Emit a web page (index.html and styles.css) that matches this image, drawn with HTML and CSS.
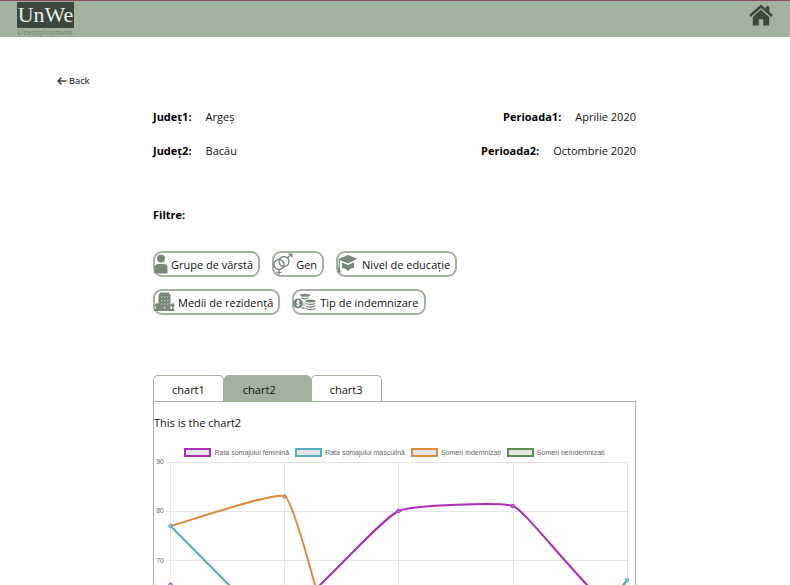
FILE: index.html
```html
<!DOCTYPE html>
<html lang="ro">
<head>
  <meta charset="utf-8">
  <title>UnWe</title>
  <link rel="stylesheet" href="styles.css">
</head>
<body>
  <div class="page">
    <header class="topbar">
      <a class="logo" href="#">
        <span class="logo-name">UnWe</span>
        <span class="logo-sub">Unemployment</span>
      </a>
      <a class="home" href="#" aria-label="Home">
        <svg width="24" height="22" viewBox="0 0 24 22" fill="currentColor">
          <path d="M12 0.5 16.8 4.8V2.2h3.5v5.7l3.5 3.2-1.5 1.8L12 3.9 1.700 12.900 0.200 11.100z"/>
          <path d="M12 5.800 20.200 13v8.500h-6v-6.200h-4.400v6.200h-6V13z"/>
        </svg>
      </a>
    </header>

    <a class="back" href="#">
      <svg width="10" height="8" viewBox="0 0 10 8" fill="none" stroke="currentColor" stroke-width="1.500"><path d="M4.500 0.500 1 4l3.500 3.500M1 4h8.500"/></svg>
      <span>Back</span>
    </a>

    <main class="content">
      <dl class="facts">
        <div class="fact"><dt>Județ1:</dt><dd>Argeș</dd></div>
        <div class="fact"><dt>Perioada1:</dt><dd>Aprilie 2020</dd></div>
        <div class="fact"><dt>Județ2:</dt><dd>Bacău</dd></div>
        <div class="fact"><dt>Perioada2:</dt><dd>Octombrie 2020</dd></div>
      </dl>

      <h2 class="filters-title">Filtre:</h2>
      <div class="filters">
        <button class="filter" type="button">
          <svg width="14" height="20" viewBox="0 0 14 20" fill="currentColor"><circle cx="7" cy="4.500" r="4"/><path d="M.5 19.500V14q0-4 4-4h5q4 0 4 4v5.500z"/></svg>
          <span>Grupe de vârstă</span>
        </button>
        <button class="filter" type="button">
          <svg width="20" height="22" viewBox="0 0 20 22" fill="none" stroke="currentColor" stroke-width="1.300"><circle cx="6" cy="11.500" r="5"/><circle cx="11" cy="8.500" r="5"/><path d="M6 16.500V22M3.500 19.300h5M14.500 5l3.500-3.500"/><path d="M15 .5h4.500V5z" fill="currentColor" stroke="none"/></svg>
          <span>Gen</span>
        </button>
        <button class="filter" type="button">
          <svg width="22" height="20" viewBox="0 0 22 20" fill="currentColor"><path d="M11 1 20.500 4.800 11 9.500 2.800 6v6.500l1 6H.3L1.500 12.500V5z"/><path d="M5 8.500 11 11l6-2.800v5.500Q14 13.500 11 17 8.500 14 5 14z"/></svg>
          <span>Nivel de educație</span>
        </button>
        <button class="filter" type="button">
          <svg width="21" height="20" viewBox="0 0 21 20"><path fill="currentColor" d="M4.500 2.500 6 1.500V.5h9v1l1.500 1V17H18v-2q-2-.5-1-2.500 1.500-2 3-.5 1.500 2-.5 3v2h1V19H0v-2h2v-2q-2-1-.5-3 1.500-1.500 3 0z"/><path stroke="#c4ccc2" d="M7 5h1.500M10 5h1.500M13 5h1.500M7 8.500h1.500M10 8.500h1.500M13 8.500h1.500M7 12h1.500M10 12h1.500M13 12h1.500M10 17v-2h1v2"/></svg>
          <span>Medii de rezidență</span>
        </button>
        <button class="filter" type="button">
          <svg width="24" height="18" viewBox="0 0 24 18"><g fill="currentColor"><circle cx="5" cy="10.500" r="4.900"/><ellipse cx="12" cy="2.300" rx="5" ry="1.500"/><ellipse cx="17.500" cy="8" rx="5" ry="1.500"/></g><path d="M8 4.800q4 2 7.500 0M12.500 10.500q5 2 10 0M12.500 13q5 2 10 0M12.500 15.500q5 2 10 0M10.500 9.500h1M10.500 12h1M8.500 15h3" fill="none" stroke="currentColor" stroke-width="1.300"/><path d="M6.700 8.700q-3-1.200-3.200.3 0 1 1.700 1.400 1.600.5 1.300 1.700-.5 1.200-3.200.2M5 7v7" fill="none" stroke="#fff"/></svg>
          <span>Tip de indemnizare</span>
        </button>
      </div>

      <div class="tabs" role="tablist">
        <button class="tab" type="button" role="tab">chart1</button>
        <button class="tab tab-active" type="button" role="tab" aria-selected="true">chart2</button>
        <button class="tab" type="button" role="tab">chart3</button>
      </div>
      <section class="panel">
        <p class="panel-title">This is the chart2</p>
        <ul class="legend">
          <li><span class="swatch purple"></span>Rata șomajului feminină</li>
          <li><span class="swatch teal"></span>Rata șomajului masculină</li>
          <li><span class="swatch orange"></span>Șomeri îndemnizați</li>
          <li><span class="swatch green"></span>Șomeri neîndemnizați</li>
        </ul>
        <svg class="chart" viewBox="154 457 481 230">
          <path class="grid" d="M166 462.500H627M166 511.500H627M166 560.500H627M166 609.500H627M170.500 462V687M284.500 462V687M398.500 462V687M513.500 462V687M627.500 462V687"/>
          <g class="axis" text-anchor="end">
            <text x="164" y="464">90</text>
            <text x="164" y="513">80</text>
            <text x="164" y="563">70</text>
          </g>
          <g class="lines">
            <path stroke="#5a9150" d="M627 580 618 594"/>
            <path stroke="#e08a3a" d="M170.500 526C180 524 272 492 284.500 496 C290 498 303 541 315 585L325 622"/>
            <path stroke="#55adc0" d="M170.500 526 229 585 245 601M627 580 618 592"/>
            <path stroke="#ae2cb9" d="M284 619 320 585C345 561 385 517 398.500 511C412 505 502 502 513 506C522 509 550 545 587 585L600 599"/>
          </g>
          <g fill="#aaa" fill-opacity=".5">
            <circle cx="170.500" cy="526" r="1.800" stroke="#55adc0"/>
            <circle cx="284.500" cy="496.500" r="1.800" stroke="#e08a3a"/>
            <circle cx="398.500" cy="511" r="1.800" stroke="#ae2cb9"/>
            <circle cx="513" cy="506" r="1.800" stroke="#ae2cb9"/>
            <circle cx="170.500" cy="585" r="1.800" stroke="#ae2cb9"/>
            <circle cx="627" cy="580" r="1.800" stroke="#55adc0"/>
          </g>
        </svg>
      </section>
    </main>
  </div>
</body>
</html>
```
FILE: styles.css
```css
* { box-sizing: border-box; }

body {
  margin: 0;
  background: #fff;
  color: #111;
  font: 11px/16px "Open Sans", "Noto Sans", sans-serif;
}

a { color: inherit; text-decoration: none; }
svg { display: block; flex: none; }

.page { height: 100vh; overflow: hidden; }

.topbar {
  display: flex;
  justify-content: space-between;
  align-items: flex-start;
  height: 37px;
  padding: 1px 17px;
  border-top: 1px solid #8b4561;
  background: #a3b19f;
  color: #3c463d;
}

.logo { display: flex; flex-direction: column; font-family: "Liberation Serif", serif; }
.logo-name {
  width: 57px;
  background: #3c463d;
  color: #e8ece6;
  font-size: 22px;
  line-height: 26px;
  text-align: center;
}
.logo-sub { color: #78877a; font-size: 9px; line-height: 9px; }
.home { padding-top: 2px; }

.back {
  display: inline-flex;
  align-items: center;
  gap: 2px;
  margin: 36px 0 0 57px;
  color: #3c463d;
  font-size: 9px;
  font-weight: 600;
  vertical-align: top;
}

.content { padding: 20px 154px 0 153px; }

.facts {
  display: grid;
  grid-template-columns: 1fr 1fr;
  row-gap: 18px;
  margin: 0;
}
.fact { display: flex; gap: 14px; }
.fact:nth-child(even) { justify-content: flex-end; }
.fact dt { color: #000; font-weight: 700; }
.fact dd { margin: 0; }

.filters-title { margin: 48px 0 28px; color: #000; font-size: 11px; line-height: 16px; }

.filters { display: flex; flex-wrap: wrap; gap: 12px; width: 66%; }
.filter {
  display: flex;
  align-items: center;
  gap: 3px;
  height: 26px;
  padding: 0 5px 0 0;
  border: 2px solid #a3b19f;
  border-radius: 9px;
  background: #fff;
  color: #111;
  font: inherit;
  white-space: nowrap;
}
.filter svg { margin-left: -1px; color: #788878; }
.filter span { padding-top: 2px; }

.tabs { display: flex; margin-top: 60px; }
.tab {
  height: 26px;
  padding: 2px 18px 0;
  border: 1px solid #a3b19f;
  border-bottom: 0;
  border-radius: 5px 5px 0 0;
  background: #fff;
  color: #111;
  font: inherit;
}
.tab-active { padding-right: 34px; background: #a3b19f; }

.panel { border: 1px solid #a3b19f; }
.panel-title { margin: 13px 0 17px; }

.legend {
  display: flex;
  justify-content: center;
  gap: 6px;
  margin: 0;
  padding: 0;
  list-style: none;
  color: #666;
  font: 7px/9px "Liberation Sans", sans-serif;
  white-space: nowrap;
}
.legend li { display: flex; align-items: center; gap: 3px; }
.swatch { width: 27px; height: 9px; border: 2px solid; background: #e5e5e5; }
.purple { border-color: #ae2cb9; }
.teal { border-color: #55adc0; }
.orange { border-color: #e08a3a; }
.green { border-color: #5a9150; }

.chart { width: 100%; }
.grid { fill: none; stroke: #e5e5e5; }
.axis { fill: #666; font: 7px "Liberation Sans", sans-serif; }
.lines { fill: none; stroke-width: 2; }
```
